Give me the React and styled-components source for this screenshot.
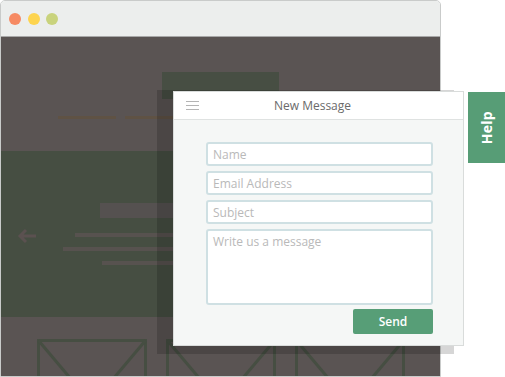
import React from "react";
import styled, { createGlobalStyle } from "styled-components";

const Global = createGlobalStyle`
  html, body { margin: 0; padding: 0; background: #ffffff; }
  body { font-family: "Open Sans", "Liberation Sans", sans-serif; }
  * { box-sizing: border-box; }
`;

const Scene = styled.div`
  position: relative;
  width: 505px;
  height: 377px;
  overflow: hidden;
  background: #ffffff;
`;

const Window = styled.div`
  width: 441px;
  height: 377px;
  border: 1px solid #c9cbca;
  border-radius: 5px 5px 0 0;
  overflow: hidden;
  display: flex;
  flex-direction: column;
`;

const TitleBar = styled.div`
  height: 36px;
  flex-shrink: 0;
  background: #eceeed;
  border-bottom: 1px solid #a8a8a8;
  display: flex;
  align-items: center;
  padding-left: 8px;
  gap: 6.5px;
`;

const Dot = styled.span`
  width: 12px;
  height: 12px;
  border-radius: 50%;
  background: ${(p) => p.$color};
`;

const Content = styled.div`
  flex: 1;
  display: flex;
  flex-direction: column;
  background: #5a5453;
`;

const TopSection = styled.div`
  height: 114px;
  flex-shrink: 0;
  display: flex;
  flex-direction: column;
  align-items: center;
  padding-top: 35px;
`;

const HeroBox = styled.div`
  width: 117px;
  height: 27px;
  background: #474e43;
`;

const NavRow = styled.div`
  display: flex;
  gap: 9px;
  margin-top: 17px;
`;

const NavItem = styled.div`
  width: 58px;
  height: 3px;
  background: #5f5244;
`;

const Slide = styled.div`
  position: relative;
  height: 166px;
  flex-shrink: 0;
  background: #464e42;
  display: flex;
  flex-direction: column;
  align-items: center;
  padding-top: 52px;
`;

const SlideTitle = styled.div`
  width: 241px;
  height: 15px;
  background: #555150;
  margin-bottom: 15px;
`;

const SlideLines = styled.div`
  display: flex;
  flex-direction: column;
  align-items: center;
  gap: 10px;
`;

const SlideLine = styled.div`
  height: 4px;
  width: ${(p) => p.$w}px;
  background: #57524f;
`;

const ArrowWrap = styled.div`
  position: absolute;
  left: 16px;
  top: 76px;
  width: 20px;
  height: 16px;
  color: #5b5150;
`;

const Gallery = styled.div`
  flex: 1;
  display: flex;
  justify-content: center;
  gap: 19px;
  padding-top: 22px;
  overflow: hidden;
`;

const Thumb = styled.svg`
  flex-shrink: 0;
  width: 110px;
  height: 130px;
`;

const ModalShadow = styled.div`
  position: absolute;
  left: 157px;
  top: 90px;
  width: 297px;
  height: 264px;
  background: rgba(0, 0, 0, 0.16);
`;

const Modal = styled.div`
  position: absolute;
  left: 173px;
  top: 91px;
  width: 291px;
  height: 255px;
  border: 1px solid #d9dcdb;
  background: #f5f7f6;
  display: flex;
  flex-direction: column;
`;

const ModalHeader = styled.div`
  position: relative;
  height: 28px;
  flex-shrink: 0;
  background: #ffffff;
  border-bottom: 1px solid #dfe2e1;
  display: flex;
  align-items: center;
  justify-content: center;
  font-size: 12px;
  color: #6a6a6a;
  padding: 0 12px 1px 0;
`;

const Hamburger = styled.span`
  position: absolute;
  left: 12px;
  top: 9px;
  width: 13px;
  display: flex;
  flex-direction: column;
  gap: 3px;
  & > i {
    display: block;
    height: 1px;
    background: #b4b4b4;
  }
`;

const Form = styled.div`
  display: flex;
  flex-direction: column;
  gap: 5px;
  padding: 22px 30px 0 32px;
`;

const Field = styled.div`
  height: ${(p) => (p.$tall ? 76 : 24)}px;
  flex-shrink: 0;
  background: #ffffff;
  border: 2px solid #cfe0e3;
  border-radius: 3px;
  padding: ${(p) => (p.$tall ? "2px" : "0")} 5px 0;
  display: flex;
  align-items: ${(p) => (p.$tall ? "flex-start" : "center")};
  font-size: 12px;
  color: #b9b9b9;
`;

const Actions = styled.div`
  display: flex;
  justify-content: flex-end;
  margin-top: -1px;
`;

const SendButton = styled.div`
  width: 80px;
  height: 25px;
  border-radius: 2px;
  background: #579e77;
  color: #ffffff;
  font-size: 12px;
  font-weight: 600;
  display: flex;
  align-items: center;
  justify-content: center;
  padding-bottom: 1px;
`;

const HelpTab = styled.div`
  position: absolute;
  left: 468px;
  top: 92px;
  width: 37px;
  height: 71px;
  background: #579d76;
  display: flex;
  align-items: center;
  justify-content: center;
`;

const HelpText = styled.span`
  writing-mode: vertical-rl;
  transform: rotate(180deg);
  color: #ffffff;
  font-size: 14px;
  font-weight: 700;
  letter-spacing: 0.3px;
`;

function ThumbBox() {
  return (
    <Thumb viewBox="0 0 110 130">
      <g stroke="#464e42" strokeWidth="3" fill="none">
        <rect x="1.5" y="1.5" width="107" height="127" />
        <line x1="1.5" y1="1.5" x2="108.5" y2="128.5" />
        <line x1="108.5" y1="1.5" x2="1.5" y2="128.5" />
      </g>
    </Thumb>
  );
}

export default function App() {
  return (
    <>
      <Global />
      <Scene>
        <Window>
          <TitleBar>
            <Dot $color="#f68a63" />
            <Dot $color="#fdd44f" />
            <Dot $color="#c9d37d" />
          </TitleBar>
          <Content>
            <TopSection>
              <HeroBox />
              <NavRow>
                <NavItem />
                <NavItem />
                <NavItem />
                <NavItem />
                <NavItem />
              </NavRow>
            </TopSection>
            <Slide>
              <ArrowWrap>
                <svg width="20" height="16" viewBox="0 0 20 16">
                  <path
                    d="M3 8 H19 M9 2 L3 8 L9 14"
                    stroke="currentColor"
                    strokeWidth="3"
                    fill="none"
                  />
                </svg>
              </ArrowWrap>
              <SlideTitle />
              <SlideLines>
                <SlideLine $w={291} />
                <SlideLine $w={315} />
                <SlideLine $w={237} />
              </SlideLines>
            </Slide>
            <Gallery>
              <ThumbBox />
              <ThumbBox />
              <ThumbBox />
            </Gallery>
          </Content>
        </Window>
        <ModalShadow />
        <Modal>
          <ModalHeader>
            <Hamburger>
              <i />
              <i />
              <i />
            </Hamburger>
            New Message
          </ModalHeader>
          <Form>
            <Field>Name</Field>
            <Field>Email Address</Field>
            <Field>Subject</Field>
            <Field $tall>Write us a message</Field>
            <Actions>
              <SendButton>Send</SendButton>
            </Actions>
          </Form>
        </Modal>
        <HelpTab>
          <HelpText>Help</HelpText>
        </HelpTab>
      </Scene>
    </>
  );
}
